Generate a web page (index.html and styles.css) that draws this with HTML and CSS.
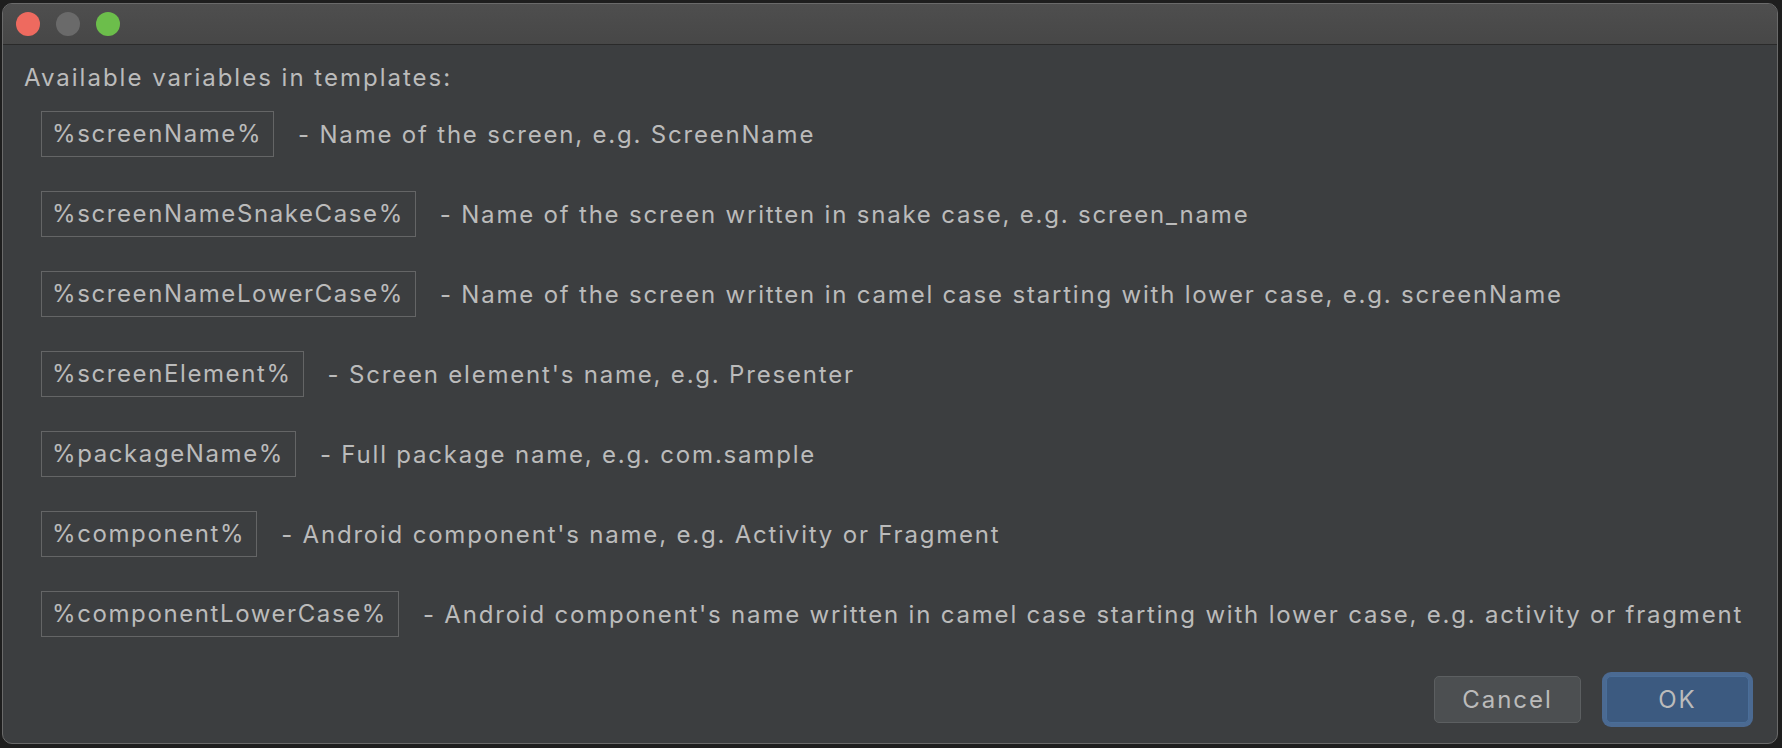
FILE: index.html
```html
<!DOCTYPE html>
<html>
<head>
<meta charset="utf-8">
<link rel="stylesheet" href="styles.css">
</head>
<body>
<div class="window">
  <div class="titlebar">
    <span class="light red"></span>
    <span class="light gray"></span>
    <span class="light green"></span>
  </div>
  <div class="content">
    <div class="heading">Available variables in templates:</div>
    <div class="rows">
      <div class="row"><span class="var">%screenName%</span><span class="desc">- Name of the screen, e.g. ScreenName</span></div>
      <div class="row"><span class="var">%screenNameSnakeCase%</span><span class="desc">- Name of the screen written in snake case, e.g. screen_name</span></div>
      <div class="row"><span class="var">%screenNameLowerCase%</span><span class="desc">- Name of the screen written in camel case starting with lower case, e.g. screenName</span></div>
      <div class="row"><span class="var">%screenElement%</span><span class="desc">- Screen element's name, e.g. Presenter</span></div>
      <div class="row"><span class="var">%packageName%</span><span class="desc">- Full package name, e.g. com.sample</span></div>
      <div class="row"><span class="var">%component%</span><span class="desc">- Android component's name, e.g. Activity or Fragment</span></div>
      <div class="row"><span class="var">%componentLowerCase%</span><span class="desc">- Android component's name written in camel case starting with lower case, e.g. activity or fragment</span></div>
    </div>
  </div>
  <div class="footer">
    <button class="btn cancel">Cancel</button>
    <button class="btn ok">OK</button>
  </div>
</div>
</body>
</html>
```
FILE: styles.css
```css
html, body {
  margin: 0;
  padding: 0;
}
body {
  width: 1782px;
  height: 748px;
  overflow: hidden;
  background: #1e1e1e;
  font-family: Inter, "Noto Sans", sans-serif;
  font-size: 24px;
  color: #bbbbbb;
}
.window {
  box-sizing: border-box;
  margin: 3px 0 0 2px;
  width: 1776px;
  height: 741px;
  border: 1px solid #6a6a6a;
  border-radius: 10px;
  background: #3c3e40;
  overflow: hidden;
  display: flex;
  flex-direction: column;
}
.titlebar {
  height: 40px;
  flex: none;
  display: flex;
  align-items: center;
  gap: 16px;
  padding-left: 13px;
  background: linear-gradient(#4e4e4e, #474747);
  border-bottom: 1px solid #2a2a2a;
}
.light {
  width: 24px;
  height: 24px;
  border-radius: 50%;
  display: block;
}
.red { background: #ee6a5f; }
.gray { background: #6a6a6a; }
.green { background: #6cbe4b; }
.content {
  padding: 18px 0 0 21px;
}
.heading {
  line-height: 30px;
  letter-spacing: 2px;
}
.rows {
  margin-top: 18px;
  padding-left: 17px;
  display: flex;
  flex-direction: column;
  gap: 34px;
}
.row {
  display: flex;
  align-items: center;
}
.var {
  box-sizing: border-box;
  height: 46px;
  line-height: 44px;
  border: 1px solid #646566;
  padding: 0 11px 0 10px;
  letter-spacing: 1.6px;
  white-space: nowrap;
}
.desc {
  margin-left: 24px;
  letter-spacing: 1.8px;
  white-space: nowrap;
}
.footer {
  margin-top: auto;
  display: flex;
  justify-content: flex-end;
  gap: 25px;
  padding: 0 28px 20px 0;
}
.btn {
  box-sizing: border-box;
  height: 47px;
  font-family: Inter, "Noto Sans", sans-serif;
  font-size: 24px;
  letter-spacing: 2px;
  color: #bbbbbb;
  border-radius: 5px;
  padding: 0;
}
.cancel {
  width: 147px;
  background: #4c4f51;
  border: 1px solid #5c5f61;
}
.ok {
  width: 143px;
  background: #3c5a80;
  border: 1px solid #4a6e99;
  box-shadow: 0 0 0 4px #4b6a92;
}
```
